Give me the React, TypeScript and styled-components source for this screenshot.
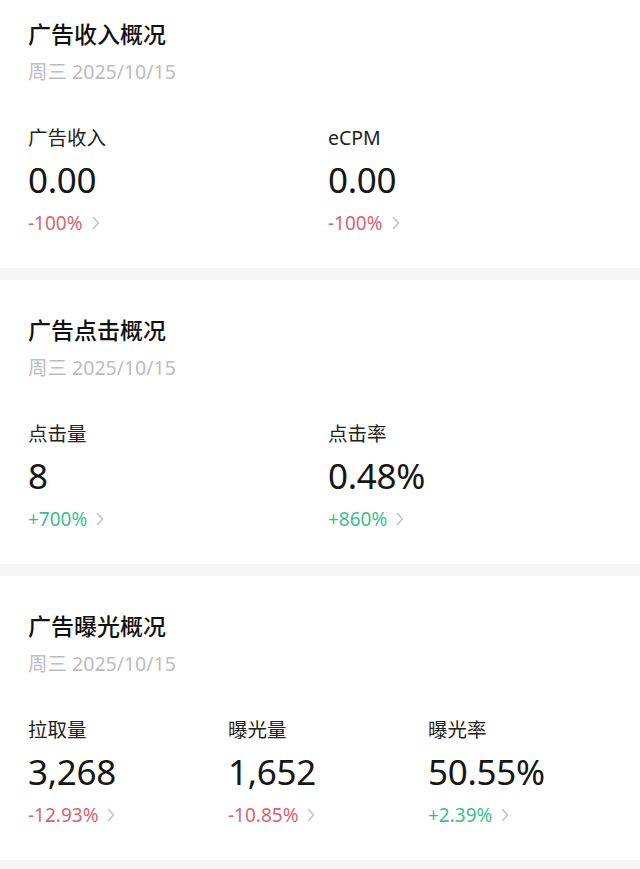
import React from "react";
import styled, { createGlobalStyle } from "styled-components";

const GlobalStyle = createGlobalStyle`
  html, body {
    margin: 0;
    padding: 0;
    background: #f5f5f5;
  }
  body {
    font-family: "Noto Sans", "Noto Sans CJK SC", sans-serif;
    color: #1a1a1a;
    -webkit-font-smoothing: antialiased;
  }
`;

const Page = styled.div`
  display: flex;
  flex-direction: column;
  gap: 12px;
  width: 640px;
`;

const Card = styled.section<{ $first?: boolean }>`
  background: #ffffff;
  padding: ${(p) => (p.$first ? "18px" : "34px")} 12px 0 28px;
  height: ${(p) => (p.$first ? "268px" : "284px")};
  box-sizing: border-box;
  display: flex;
  flex-direction: column;
`;

const Title = styled.h2`
  margin: 0;
  font-family: "Noto Sans CJK SC", sans-serif;
  font-size: 23px;
  font-weight: 500;
  line-height: 30px;
  color: #111;
`;

const DateText = styled.div`
  margin-top: 12px;
  font-family: "Noto Sans", "Noto Sans CJK SC", sans-serif;
  font-size: 19.5px;
  line-height: 24px;
  color: #bdbdbd;
`;

const Metrics = styled.div<{ $cols: number }>`
  margin-top: 41px;
  display: grid;
  grid-template-columns: repeat(${(p) => p.$cols}, 1fr);
`;

const Metric = styled.div`
  display: flex;
  flex-direction: column;
`;

const Label = styled.div`
  font-family: "Noto Sans", "Noto Sans CJK SC", sans-serif;
  font-size: 19.5px;
  line-height: 26px;
  color: #222;
`;

const Value = styled.div`
  margin-top: 8px;
  font-family: "Noto Sans", "Noto Sans CJK SC", sans-serif;
  font-size: 35px;
  line-height: 42px;
  color: #161616;
  letter-spacing: -0.3px;
`;

const Change = styled.div<{ $up: boolean }>`
  margin-top: 10px;
  display: flex;
  align-items: center;
  gap: 9px;
  font-family: "Noto Sans", sans-serif;
  font-size: 19px;
  line-height: 24px;
  color: ${(p) => (p.$up ? "#3cbf8f" : "#d9646c")};
`;

const Chevron = () => (
  <svg width="8" height="14" viewBox="0 0 8 14" fill="none">
    <path d="M1.5 1.5 L6.5 7 L1.5 12.5" stroke="#c4c4c4" strokeWidth="1.6" strokeLinecap="round" strokeLinejoin="round" />
  </svg>
);

type M = { label: string; value: string; change: string; up: boolean };
type S = { title: string; metrics: M[] };

const sections: S[] = [
  {
    title: "广告收入概况",
    metrics: [
      { label: "广告收入", value: "0.00", change: "-100%", up: false },
      { label: "eCPM", value: "0.00", change: "-100%", up: false },
    ],
  },
  {
    title: "广告点击概况",
    metrics: [
      { label: "点击量", value: "8", change: "+700%", up: true },
      { label: "点击率", value: "0.48%", change: "+860%", up: true },
    ],
  },
  {
    title: "广告曝光概况",
    metrics: [
      { label: "拉取量", value: "3,268", change: "-12.93%", up: false },
      { label: "曝光量", value: "1,652", change: "-10.85%", up: false },
      { label: "曝光率", value: "50.55%", change: "+2.39%", up: true },
    ],
  },
];

export default function App() {
  return (
    <>
      <GlobalStyle />
      <Page>
        {sections.map((s, i) => (
          <Card key={s.title} $first={i === 0}>
            <Title>{s.title}</Title>
            <DateText>周三 2025/10/15</DateText>
            <Metrics $cols={s.metrics.length === 3 ? 3 : 2}>
              {s.metrics.map((m) => (
                <Metric key={m.label}>
                  <Label>{m.label}</Label>
                  <Value>{m.value}</Value>
                  <Change $up={m.up}>
                    <span>{m.change}</span>
                    <Chevron />
                  </Change>
                </Metric>
              ))}
            </Metrics>
          </Card>
        ))}
      </Page>
    </>
  );
}
